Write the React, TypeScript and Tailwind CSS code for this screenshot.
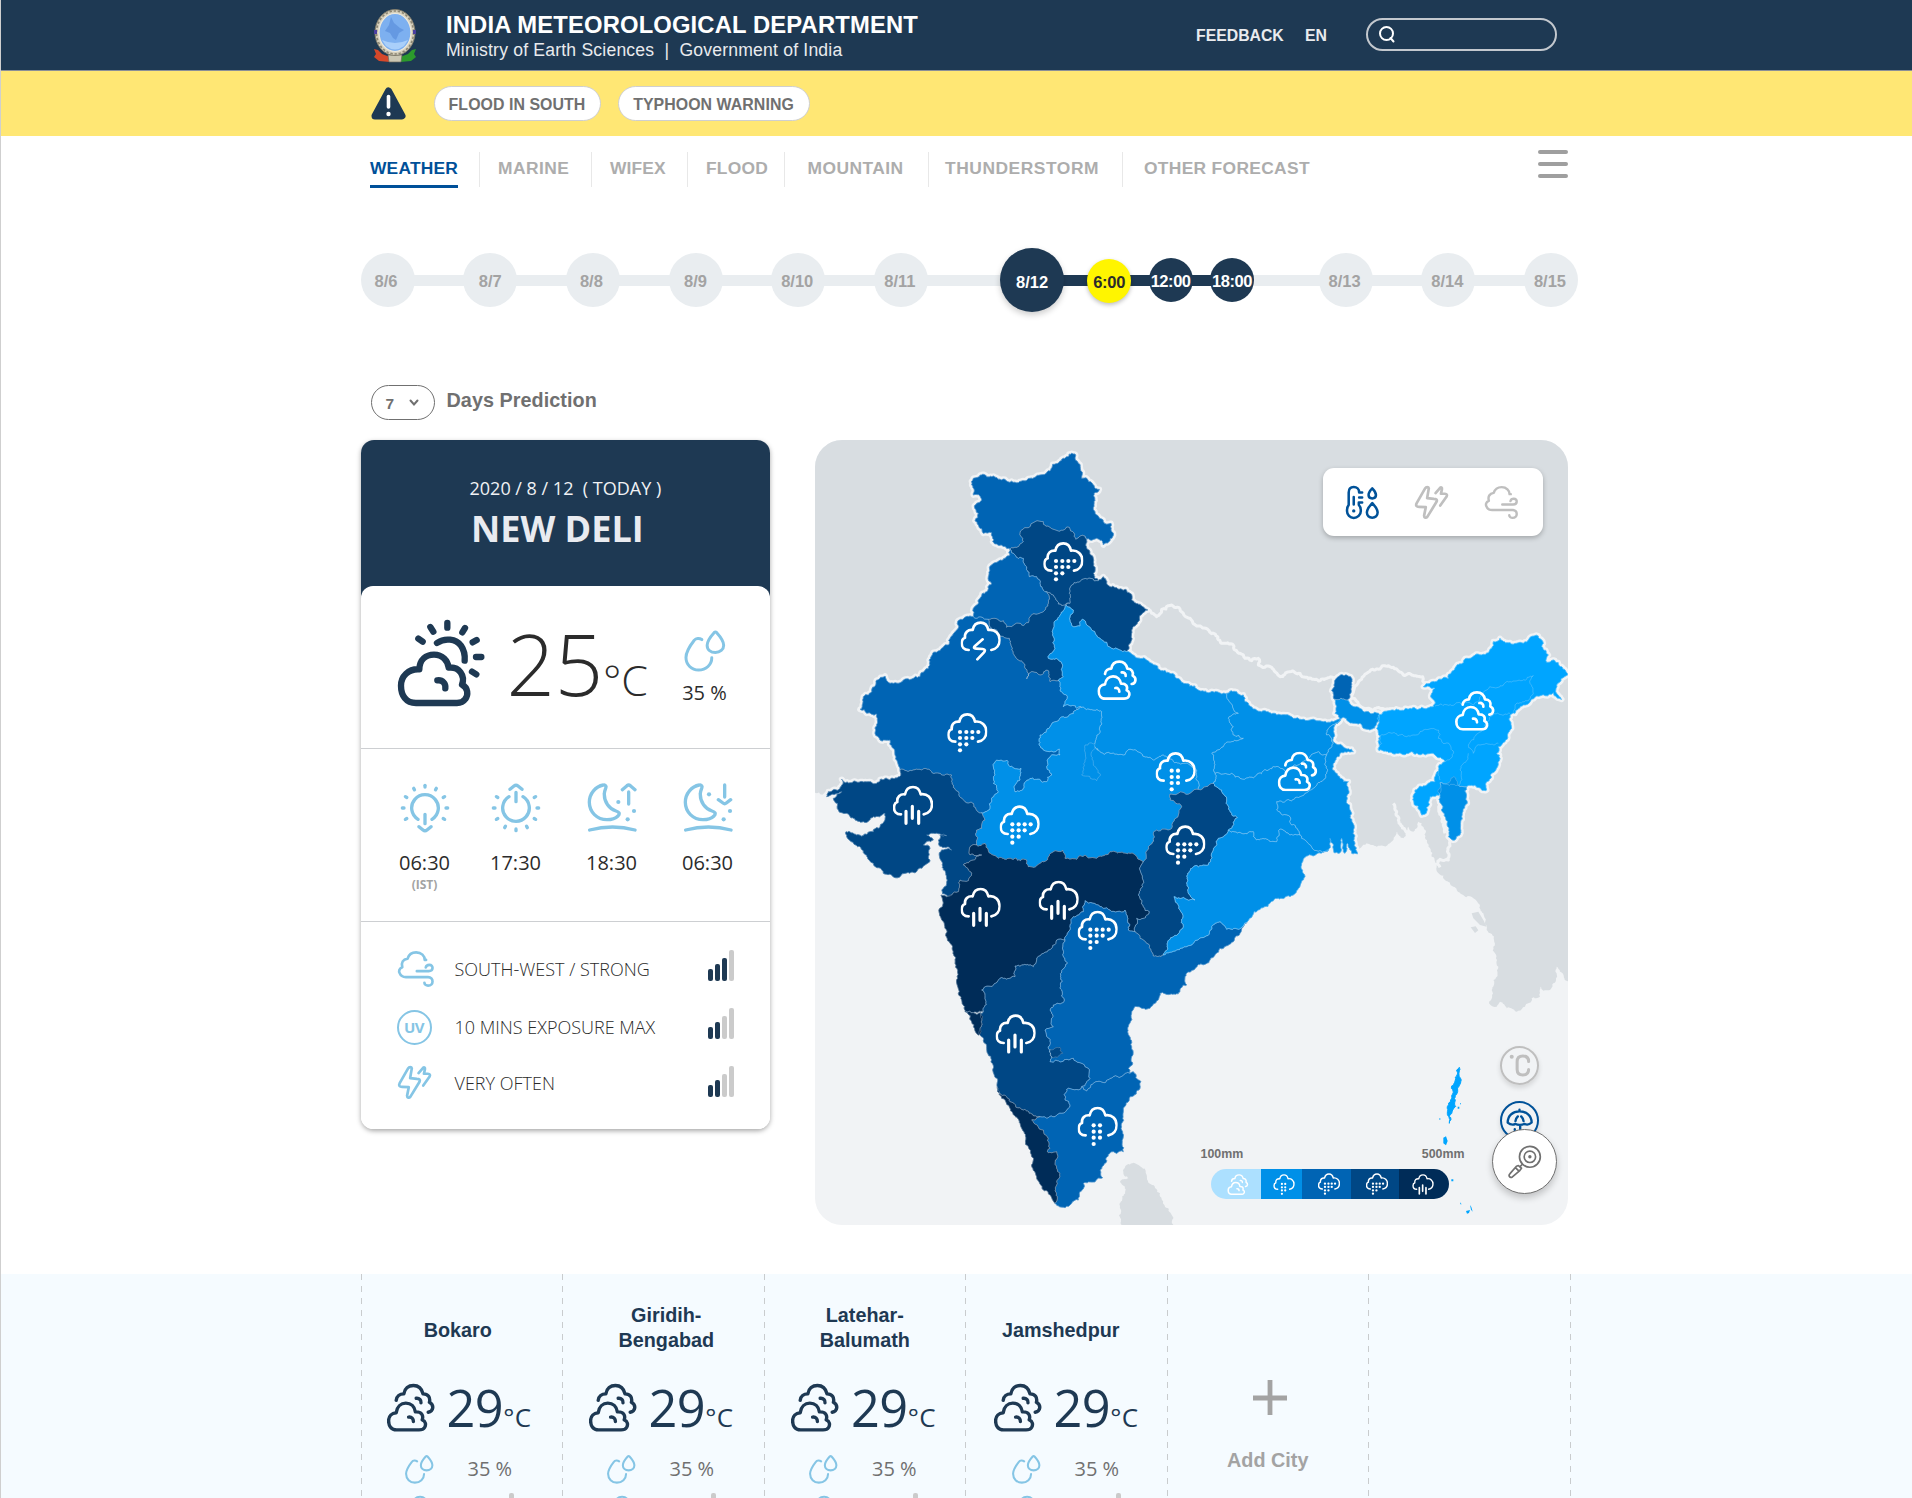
import React from "react";

const NAVY = "#1e3953";

/* ---------- map geometry ---------- */

type Pt = [number, number];

function parse(s: string): Pt[] {
  return s
    .trim()
    .split(/\s+/)
    .map((p) => p.split(",").map(Number) as Pt);
}

// Deterministic value in [-1, 1] which is the same for both directions of an edge.
function noise(a: Pt, b: Pt): number {
  const v = Math.sin((a[0] + b[0]) * 12.9898 + (a[1] + b[1]) * 78.233) * 43758.5453;
  return (v - Math.floor(v)) * 2 - 1;
}

function split(a: Pt, b: Pt, out: Pt[]) {
  const swap = a[0] > b[0] || (a[0] === b[0] && a[1] > b[1]);
  const p = swap ? b : a;
  const q = swap ? a : b;
  const dx = q[0] - p[0];
  const dy = q[1] - p[1];
  const len = Math.hypot(dx, dy);
  if (len < 7) {
    out.push(b);
    return;
  }
  const n = noise(p, q) * Math.min(0.24, 6 / len);
  const m: Pt = [(p[0] + q[0]) / 2 - dy * n, (p[1] + q[1]) / 2 + dx * n];
  split(a, m, out);
  split(m, b, out);
}

function outline(s: string, closed = true): string {
  const pts = parse(s);
  const out: Pt[] = [pts[0]];
  for (let i = 1; i < pts.length; i++) split(pts[i - 1], pts[i], out);
  if (closed) split(pts[pts.length - 1], pts[0], out);
  return "M" + out.map((p) => p[0].toFixed(1) + " " + p[1].toFixed(1)).join("L") + (closed ? "Z" : "");
}

const A = "#0064b4";
const B = "#004785";
const C = "#0090e8";
const D = "#002c58";
const E = "#00a5ff";

const states: [string, string][] = [
  [A, "485,165 490,145 518,133 545,140 585,148 625,158 660,145 690,135 712,125 728,103 760,85 785,70 795,72 805,100 815,145 845,158 868,178 852,190 855,245 880,275 903,280 908,320 880,345 860,325 840,330 825,318 798,328 778,292 745,303 720,292 700,275 675,275 655,293 635,300 640,335 620,352 600,357 575,345 548,335 545,308 520,310 505,285 495,272 505,250 493,228 515,208 510,198 490,195 493,180"],
  [B, "635,300 655,293 675,275 700,275 720,292 745,303 778,292 798,328 825,318 830,355 850,385 850,430 865,452 820,447 785,465 778,490 780,520 745,522 730,495 710,485 690,460 680,440 658,440 650,415 640,385 615,375 600,357 620,352 640,335"],
  [A, "600,357 615,375 640,385 650,415 658,440 680,440 690,460 710,485 715,520 700,545 665,555 655,578 615,582 590,592 580,572 555,565 535,568 490,560 490,535 510,505 530,485 545,462 535,440 545,405 570,390 600,375"],
  [A, "480,558 490,560 535,568 540,590 560,600 580,620 598,625 605,660 620,685 645,705 650,747 668,725 690,735 715,722 720,755 745,752 750,780 772,800 765,820 760,830 815,832 760,860 720,890 690,915 687,945 700,960 748,957 750,975 715,985 710,1010 725,1035 710,1055 680,1048 655,1050 640,1075 615,1085 612,1070 630,1050 633,1015 600,1010 590,990 560,990 550,1010 555,1035 550,1060 565,1085 545,1110 540,1135 515,1148 490,1120 465,1115 445,1085 430,1065 425,1035 395,1035 360,1020 330,1018 270,1020 255,975 240,930 210,930 195,910 202,880 200,852 170,850 150,838 160,800 185,780 200,750 225,738 240,760 280,750 330,740 360,705 365,678 415,645 440,600 448,570"],
  [C, "815,832 875,845 875,880 855,940 870,965 900,970 940,975 970,960 1030,990 1060,975 1120,1000 1160,1020 1165,1078 1080,1092 1080,1110 1115,1130 1105,1155 1085,1195 1040,1200 1015,1250 1000,1295 960,1270 900,1265 870,1278 825,1275 800,1288 765,1285 758,1260 735,1262 715,1280 690,1300 670,1312 655,1310 650,1290 580,1285 535,1262 525,1240 500,1245 500,1200 515,1195 525,1170 515,1148 540,1135 545,1110 565,1085 550,1060 555,1035 550,1010 560,990 590,990 600,1010 633,1015 630,1050 612,1070 615,1085 640,1075 655,1050 680,1048 710,1055 725,1035 710,1010 715,985 750,975 748,957 700,960 687,945 690,915 720,890 760,860"],
  [B, "535,568 555,565 580,572 590,592 615,582 655,578 665,555 700,545 715,520 710,485 730,495 745,522 768,526 750,555 732,580 730,620 735,655 715,685 745,690 758,705 760,740 745,752 720,755 715,722 690,735 668,725 650,747 645,705 620,685 605,660 598,625 580,620 560,600 540,590"],
  [B, "785,465 820,447 865,452 880,440 900,470 960,490 965,510 1013,540 985,575 965,600 965,630 950,665 905,655 870,625 845,600 817,568 810,588 790,590 780,570 790,540 768,526 780,520 778,490"],
  [C, "768,526 790,540 780,570 790,590 810,588 817,568 845,600 870,625 905,655 950,665 975,680 1010,690 1050,720 1100,745 1155,768 1165,780 1220,785 1250,790 1255,810 1285,850 1255,865 1270,890 1270,915 1300,925 1265,935 1205,970 1215,1030 1210,1060 1165,1078 1160,1020 1120,1000 1060,975 1030,990 970,960 940,975 900,970 870,965 855,950 845,965 850,1000 872,1035 860,1052 815,1035 825,990 825,945 855,940 875,880 875,845 815,832 760,830 765,820 772,800 750,780 745,752 760,740 758,705 745,690 715,685 735,655 730,620 732,580 750,555"],
  [B, "270,1020 330,1018 360,1020 395,1035 425,1035 430,1065 445,1085 465,1115 490,1120 515,1148 525,1170 515,1195 500,1200 500,1245 480,1250 480,1275 515,1275 490,1290 460,1305 485,1330 475,1352 450,1350 445,1385 425,1395 398,1392 412,1350 400,1320 392,1290 388,1268 425,1260 395,1250 385,1230 390,1215 410,1217 370,1210 350,1215 370,1230 340,1245 360,1255 355,1280 360,1290 345,1305 300,1330 255,1343 220,1330 190,1300 150,1250 110,1220 108,1205 140,1215 190,1205 225,1170 225,1150 190,1160 160,1175 130,1165 85,1140 70,1105 95,1085 50,1100 55,1085 90,1075 95,1048 165,1055 200,1060 225,1045 240,1050 268,1040"],
  [D, "480,1250 500,1245 525,1240 535,1262 580,1285 650,1290 655,1310 670,1312 690,1300 715,1280 735,1262 758,1260 765,1285 800,1288 825,1275 870,1278 900,1265 960,1270 1000,1295 990,1320 998,1370 985,1395 1000,1430 1018,1445 1000,1465 980,1465 975,1505 955,1500 945,1440 900,1440 870,1430 825,1412 820,1445 790,1460 780,1500 765,1530 740,1530 715,1560 680,1590 670,1610 615,1608 615,1640 580,1645 550,1665 515,1680 528,1715 520,1745 490,1748 465,1745 445,1690 435,1600 420,1540 410,1500 395,1470 393,1395 425,1395 445,1385 450,1350 475,1352 485,1330 460,1305 490,1290 515,1275 480,1275"],
  [B, "515,1680 550,1665 580,1645 615,1640 615,1608 670,1610 680,1590 715,1560 740,1530 765,1530 760,1570 772,1598 755,1625 755,1680 762,1715 730,1725 725,1750 730,1790 705,1800 715,1850 725,1880 720,1895 755,1895 790,1885 825,1910 840,1945 815,1970 770,1978 765,2010 780,2025 775,2035 740,2055 690,2060 640,2040 600,2015 562,1972 548,1920 545,1890 530,1850 510,1815 512,1750 520,1745 528,1715"],
  [D, "468,1745 490,1748 512,1748 512,1800 505,1815 485,1775"],
  [A, "825,1412 870,1430 900,1440 945,1440 955,1500 975,1505 1010,1540 1030,1578 1060,1575 1100,1560 1130,1550 1150,1540 1185,1520 1205,1490 1230,1475 1250,1498 1285,1498 1312,1475 1290,1510 1265,1537 1230,1555 1200,1590 1150,1620 1125,1640 1130,1665 1110,1685 1080,1693 1050,1690 1035,1720 1020,1735 985,1730 965,1745 955,1790 965,1850 968,1900 955,1915 960,1930 910,1940 885,1958 850,1960 830,1983 815,1970 840,1945 825,1910 790,1885 755,1895 720,1895 725,1880 715,1850 705,1800 730,1790 725,1750 730,1725 762,1715 755,1680 755,1625 772,1598 760,1570 765,1530 780,1500 790,1460 820,1445"],
  [A, "690,2060 740,2055 775,2035 780,2025 765,2010 770,1978 815,1970 830,1983 850,1960 885,1958 910,1940 960,1930 970,1925 993,1955 990,1975 960,2000 940,2040 935,2080 940,2120 940,2165 900,2168 870,2220 878,2243 820,2260 808,2290 805,2310 765,2333 735,2320 742,2300 740,2265 750,2230 740,2215 740,2165 712,2165 712,2120 700,2100 665,2070"],
  [D, "562,1972 600,2015 640,2040 690,2060 665,2070 700,2100 712,2120 712,2165 740,2165 740,2215 750,2230 740,2265 742,2300 735,2320 700,2280 680,2240 668,2200 655,2150 630,2080 600,2035 575,2005"],
  [B, "720,1858 750,1852 758,1870 742,1882 720,1875"],
  [B, "1080,1092 1165,1078 1210,1060 1235,1080 1250,1110 1260,1145 1282,1163 1255,1200 1225,1225 1210,1260 1195,1305 1155,1307 1133,1330 1140,1395 1155,1410 1130,1408 1092,1400 1110,1440 1120,1490 1090,1520 1060,1575 1030,1578 1010,1540 975,1505 980,1465 1000,1465 1018,1445 1000,1430 985,1395 998,1370 990,1320 1000,1295 1015,1250 1040,1200 1085,1195 1105,1155 1115,1130 1080,1110"],
  [C, "1225,1225 1255,1200 1330,1205 1340,1230 1400,1235 1410,1197 1440,1215 1470,1215 1485,1230 1520,1262 1555,1260 1520,1272 1490,1278 1475,1300 1485,1340 1465,1375 1440,1400 1380,1420 1345,1440 1312,1475 1285,1498 1250,1498 1230,1475 1205,1490 1185,1520 1150,1540 1130,1550 1100,1560 1060,1575 1090,1520 1120,1490 1110,1440 1092,1400 1130,1408 1155,1410 1140,1395 1133,1330 1155,1307 1195,1305 1210,1260"],
  [C, "1215,1030 1265,1030 1290,1045 1340,1035 1390,1010 1430,1025 1490,990 1525,965 1550,975 1550,1030 1510,1075 1470,1100 1400,1115 1400,1140 1440,1160 1445,1185 1470,1215 1440,1215 1410,1197 1400,1235 1340,1230 1330,1205 1255,1200 1282,1163 1260,1145 1250,1110 1235,1080 1210,1060"],
  [C, "1250,790 1280,785 1300,795 1305,815 1340,840 1370,845 1400,855 1450,865 1500,870 1540,875 1580,870 1590,865 1560,890 1550,915 1570,940 1550,975 1525,965 1490,990 1430,1025 1390,1010 1340,1035 1290,1045 1265,1030 1215,1030 1205,970 1265,935 1300,925 1270,915 1270,890 1255,865 1285,850 1255,810"],
  [C, "1575,808 1610,810 1640,830 1680,850 1708,853 1700,880 1680,900 1660,895 1650,880 1630,880 1600,862 1572,900 1568,930 1600,950 1630,965 1590,970 1570,1000 1568,1020 1590,1045 1615,1055 1610,1100 1625,1150 1630,1200 1642,1272 1625,1270 1612,1240 1605,1270 1595,1225 1588,1270 1572,1268 1560,1225 1555,1260 1520,1262 1485,1230 1470,1215 1445,1185 1440,1160 1400,1140 1400,1115 1470,1100 1510,1075 1550,1030 1550,975 1570,940 1550,915 1560,890 1590,865 1575,850"],
  [A, "1570,800 1572,765 1582,742 1610,735 1622,740 1625,770 1620,800 1610,810 1575,808"],
  [E, "1840,770 1860,760 1915,745 1925,725 1970,685 2045,655 2050,635 2070,625 2100,638 2140,640 2160,622 2185,618 2200,640 2195,650 2215,675 2210,697 2230,690 2255,710 2273,735 2240,765 2237,785 2255,808 2230,788 2180,798 2140,825 2115,850 2100,855 2100,900 2085,935 2065,950 2060,970 2070,985 2045,1030 2030,1080 2000,1072 1970,1070 1945,1065 1910,1062 1890,1058 1888,1095 1860,1100 1850,1145 1835,1155 1825,1130 1808,1110 1815,1080 1875,1055 1885,1010 1905,995 1875,975 1820,970 1760,970 1705,960 1710,920 1700,895 1705,855 1745,840 1800,835 1870,830 1875,815 1865,790 1875,775"],
  [C, "1890,1058 1910,1062 1930,1040 1945,1065 1970,1070 1972,1120 1955,1160 1950,1215 1935,1230 1915,1220 1905,1160 1890,1100"],
];

const shapes = states.map(([fill, pts]) => ({ fill, d: outline(pts) }));

const provinceLines = [
  "1875,828 1940,818 1990,825 2030,780 2040,770 2100,755 2170,737 2160,760 2170,790 2115,825 2110,845",
  "1708,960 1710,920 1740,908 1790,920 1810,915 1830,905 1885,900 1885,925 1920,945 1930,970 1905,995",
  "1975,945 2005,910 2040,860 2100,850",
  "1975,945 1990,970 2010,945 2065,940",
  "1975,970 1950,1020 1948,1065",
  "1885,1010 1890,1050",
].map((s) => outline(s, false));

const foreignBorders = [
  "1013,540 1025,550 1040,560 1055,538 1075,527 1110,537 1140,565 1160,588 1195,600 1235,640 1270,645 1290,670 1325,692 1345,685 1345,705 1385,712 1410,740 1425,733 1455,728 1510,748 1575,743",
  "1620,800 1640,765 1670,730 1720,707 1750,712 1780,735 1838,740 1845,765",
  "1625,805 1650,828 1690,842 1745,840",
  "1915,1220 1915,1290 1890,1288 1882,1302 1890,1312",
  "1860,1098 1885,1092 1895,1160 1905,1210",
  "1750,1120 1760,1145 1765,1170 1785,1200 1800,1215",
].map((s) => outline(s, false));

const land = outline(
  "1600,1262 1540,1230 1400,1150 600,1150 225,1060 95,1060 60,1095 15,1088 -40,1080 -40,-20 2340,-20 2340,1740 2276,1668 2240,1610 2238,1650 2220,1680 2200,1682 2190,1670 2190,1700 2165,1705 2145,1730 2125,1742 2090,1735 2070,1715 2060,1730 2037,1720 2045,1680 2050,1650 2065,1610 2055,1570 2052,1530 2030,1500 2020,1450 1990,1405 1950,1390 1930,1370 1905,1350 1880,1310 1865,1280 1852,1240 1848,1205 1835,1180 1825,1175 1810,1205 1795,1190 1780,1225 1760,1205 1740,1240 1700,1250 1670,1240 1640,1268"
);
const lanka = outline("945,2210 975,2200 1010,2235 1050,2290 1090,2385 1090,2440 935,2440 935,2385 930,2330 945,2270 930,2256 955,2245 940,2225");
const andaman = outline("1948,1912 1940,1920 1936,1950 1924,1975 1922,2010 1912,2050 1918,2080 1928,2040 1935,2015 1943,1980 1948,1940");

/* ---------- icons ---------- */

type IconProps = { className?: string; x?: number; y?: number; size?: number };

function Box({ vb, w = 8, children, className, x, y, size }: IconProps & { vb: string; w?: number; children: React.ReactNode }) {
  return (
    <svg viewBox={vb} x={x} y={y} width={size} height={size} className={className} fill="none" stroke="currentColor" strokeWidth={w} strokeLinecap="round" strokeLinejoin="round">
      {children}
    </svg>
  );
}

const rainCloud = "M24 87C9 87 3 77 3 67C3 58 7 52 13 50C11 35 22 25 36 27C39 11 49 5 60 5C72 5 80 13 83 27C103 24 117 38 117 57C117 72 108 84 92 87";

function Dots({ pts }: { pts: Pt[] }) {
  return (
    <g fill="currentColor" stroke="none">
      {pts.map(([cx, cy]) => (
        <circle key={cx + "-" + cy} cx={cx} cy={cy} r={6.3} />
      ))}
    </g>
  );
}

const Rain = (p: IconProps) => (
  <Box vb="0 0 120 120" {...p}>
    <path d={rainCloud} />
    <Dots pts={[[38, 58], [57, 58], [75, 58], [93, 58], [38, 76], [57, 76], [75, 76], [38, 95], [57, 95], [38, 113]]} />
  </Box>
);
const Drizzle = (p: IconProps) => (
  <Box vb="0 0 120 120" {...p}>
    <path d={rainCloud} />
    <Dots pts={[[48, 57], [67, 57], [48, 76], [67, 76], [48, 94], [67, 94], [48, 113]]} />
  </Box>
);
const Heavy = (p: IconProps) => (
  <Box vb="0 0 120 120" {...p}>
    <path d={rainCloud} />
    <path strokeWidth={9.5} d="M39 78V114M58 63V99M77 78V114" />
  </Box>
);
const Thunder = (p: IconProps) => (
  <Box vb="0 0 120 120" {...p}>
    <path d={rainCloud} />
    <path d="M66 55L43 75C38 80 40 83 46 83L66 84C74 85 74 89 70 94L50 115" />
  </Box>
);
const Cloudy = ({ w = 8.5, ...p }: IconProps & { w?: number }) => (
  <Box vb="0 0 120 120" w={w} {...p}>
    <path d="M23 42C24 32 32 26 42 26C44 12 54 5 66 5C79 5 87 13 90 26C103 26 109 35 106 47C119 54 116 70 103 72" />
    <path d="M73 37C81 36 86 42 85 48" />
    <path d="M24 116C10 116 4 105 4 93C4 82 12 74 23 73C25 58 35 49 47 49C60 49 69 58 71 71C86 70 92 79 88 91C97 94 98 103 94 110C91 115 87 116 80 116Z" />
    <path d="M54 84C62 83 66 88 66 95" />
  </Box>
);
const SunCloud = (p: IconProps) => (
  <Box vb="135 565 270 270" w={19} {...p}>
    <path d="M195 820C165 820 150 797 150 768C150 740 172 717 205 719C206 690 225 675 249 675C275 675 290 693 293 714C325 710 343 738 333 765C352 775 352 796 343 808C336 818 328 820 318 820Z" />
    <path d="M259 752C275 750 285 762 283 776M258 640C282 623 315 628 330 648C342 665 342 680 341 693" />
    <path d="M289 580V594M238 592L247 606M202 627L215 636M342 595L334 608M377 631L365 638M375 682H391M363 726L376 734" />
  </Box>
);
const Drops = (p: IconProps) => (
  <Box vb="1000 600 130 130" w={9} {...p}>
    <path d="M1094 611C1084 622 1073 636 1073 649C1073 663 1084 671 1098 671C1112 671 1123 662 1123 649C1123 636 1112 622 1102 611Q1098 607 1094 611Z" />
    <path d="M1057 632C1050 627 1039 627 1034 634C1020 652 1009 668 1009 686C1009 708 1026 724 1047 724C1070 724 1087 708 1087 687" />
  </Box>
);

function SunArrow({ flip, ...p }: IconProps & { flip?: boolean }) {
  const angles = [150, 180, 210, 240, 270, 300, 330, 0, 30];
  return (
    <Box vb="-75 -75 150 150" w={10} {...p}>
      <g transform={flip ? "scale(1 -1)" : undefined}>
        <path d="M-21 34A40 40 0 1 1 21 34M0 19V47M-18 56L-6 66Q0 71 6 66L18 56" />
        {angles.map((a) => {
          const c = Math.cos((a * Math.PI) / 180);
          const s = Math.sin((a * Math.PI) / 180);
          return <line key={a} x1={c * 63} y1={s * 63} x2={c * 68} y2={s * 68} />;
        })}
      </g>
    </Box>
  );
}

function Moon({ down, ...p }: IconProps & { down?: boolean }) {
  const dots: Pt[] = down ? [[786, 164], [849, 214], [830, 239]] : [[802, 187], [849, 214], [830, 239]];
  return (
    <Box vb="708 130 150 150" w={10} {...p}>
      <path d="M757 136C734 140 715 162 715 188C715 217 738 240 768 240C782 240 794 236 801 229C808 221 804 217 795 214C775 208 759 188 760 162C760 152 766 145 765 140C763 135 760 135 757 136Z" />
      <path d="M716 271Q785 253 852 271" />
      <path d={down ? "M833 136V172M814 180L828 190Q833 194 838 190L851 180" : "M833 157V193M814 150L828 138Q833 134 838 138L852 150"} />
      <Dots pts={dots} />
    </Box>
  );
}

const Wind = (p: IconProps) => (
  <Box vb="138 632 115 115" {...p}>
    <path d="M226 662H222C222 650 212 639 196 639C182 639 173 648 170 658C156 660 150 670 154 684C144 688 143 697 146 702C149 710 156 714 165 714H232C250 714 250 740 232 740C226 740 221 736 221 731" />
    <path d="M198 696H234C249 696 249 677 236 677C230 677 226 680 225 685" />
  </Box>
);
const Bolts = (p: IconProps) => (
  <Box vb="139 979 104 104" {...p}>
    <path d="M183 989C182 984 175 984 172 989L147 1033C143 1041 147 1044 154 1044L174 1045L169 1070C169 1077 175 1078 179 1073L206 1029C209 1022 205 1020 198 1020L178 1018Z" />
    <path d="M203 1003L216 988C220 984 223 987 222 992L219 1005H231C237 1005 238 1009 236 1013L217 1040" />
  </Box>
);
const Thermo = (p: IconProps) => (
  <Box vb="465 164 104 104" w={7.5} {...p}>
    <path d="M516 186H507C507 176 500 170 491 170C482 170 476 176 476 186V223C472 228 471 234 471 241C471 253 480 262 491 262C502 262 512 253 512 241C512 233 510 227 506 223V216H516M507 201H516M491 200V222" />
    <circle cx="491" cy="241" r="5" fill="currentColor" stroke="none" />
    <path d="M546 174C540 180 535 187 535 194C535 200 539 204 546 204C553 204 557 200 557 194C557 187 552 180 546 174Z" />
    <path d="M546 218C538 227 530 235 530 245C530 255 537 261 546 261C555 261 562 255 562 245C562 235 554 227 546 218Z" />
  </Box>
);
const Umbrella = (p: IconProps) => (
  <Box vb="950 830 80 80" w={7} {...p}>
    <path d="M990 838V843M955 876C955 855 970 843 990 843C1010 843 1026 855 1026 876C1018 884 1008 882 1004 880C998 884 984 884 978 880C970 884 962 882 955 876ZM978 872C979 866 982 861 985 858M1002 872C1001 866 998 861 995 858M992 884V900M976 896V898" />
  </Box>
);
const Locate = (p: IconProps) => (
  <Box vb="950 942 104 104" w={5} {...p}>
    <circle cx="1018" cy="980" r="31" />
    <circle cx="1018" cy="980" r="17" />
    <circle cx="1018" cy="980" r="5" fill="currentColor" stroke="none" />
    <path d="M995 1003L988 1010M984 1006L993 1014L988 1021L966 1040C958 1044 953 1036 959 1030L978 1008ZM975 1012L984 1021" />
  </Box>
);

function Emblem() {
  return (
    <svg viewBox="0 0 44 54" className="h-[54px] w-[44px]">
      <path d="M1 40L5 41L9 45L17 48V53L6 52L1 48L3 45Z" fill="#d5482a" />
      <path d="M43 40L39 41L35 45L27 48V53L38 52L43 48L41 45Z" fill="#2c9a2c" />
      <path d="M15 46H29L28 53H16Z" fill="#cbc7b4" stroke="#6f6b5b" strokeWidth="0.7" />
      <ellipse cx="22" cy="23.500" rx="20" ry="23" fill="#d6d0bd" stroke="#827d6c" strokeWidth="1" />
      <ellipse cx="22" cy="23.500" rx="18.500" ry="21.500" fill="none" stroke="#8d8774" strokeWidth="1.600" strokeDasharray="2.400 1.800" />
      <ellipse cx="22" cy="23.500" rx="16" ry="19" fill="#7db0f0" stroke="#efeadb" strokeWidth="1.200" />
      <path d="M18 8L21 14L27 19L31 21L26 24L23 31L20 29L17 24L12 22L16 16Z" fill="#5f93de" opacity="0.8" />
      <path d="M9 31Q22 37 35 31L31 37Q22 44 13 37Z" fill="#a9cffa" />
      <rect x="1" y="21" width="3" height="4" fill="#4b3fa0" />
      <rect x="40" y="21" width="3" height="4" fill="#4b3fa0" />
    </svg>
  );
}

/* ---------- page pieces ---------- */

function Header() {
  return (
    <header className="flex h-[71px] border-b border-[#8b9097] bg-[#1e3953] pl-[373px]">
      <div className="mt-[9px]">
        <Emblem />
      </div>
      <div className="ml-[29px] w-[750px] pt-[12px] whitespace-pre">
        <div className="text-[23.8px] leading-[25px] font-bold tracking-[0.14px] text-white">INDIA METEOROLOGICAL DEPARTMENT</div>
        <div className="text-[17.6px] leading-[26px] tracking-[0.19px] text-[#e9ebee]">Ministry of Earth Sciences  |  Government of India</div>
      </div>
      <div className="flex h-[70px] items-center text-[15.8px] font-bold text-[#e9ebee]">
        <span className="w-[109px] pt-px">FEEDBACK</span>
        <span className="w-[61px] pt-px">EN</span>
        <div className="-mt-[2px] flex h-[33px] w-[191px] items-center rounded-[17px] border-2 border-[#c3c8ce] pl-[10px]">
          <svg viewBox="0 0 18 18" className="h-[18px] w-[18px]" fill="none" stroke="#fff" strokeWidth="2" strokeLinecap="round">
            <circle cx="8.500" cy="8.500" r="6.500" />
            <path d="M12.500 13L15.500 16.500" />
          </svg>
        </div>
      </div>
    </header>
  );
}

function Alerts() {
  return (
    <div className="flex h-[65px] items-center bg-[#ffe774] pl-[370.500px]">
      <svg viewBox="0 0 35 33" className="h-[33px] w-[35px]">
        <path d="M17.500 4L31 29H4Z" fill={NAVY} stroke={NAVY} strokeWidth="7" strokeLinejoin="round" />
        <path d="M17.500 9.500V20" stroke="#fff" strokeWidth="3.600" strokeLinecap="round" />
        <circle cx="17.500" cy="27" r="2.200" fill="#fff" />
      </svg>
      <div className="ml-[28px] flex gap-[17px] text-[15.9px] font-bold tracking-[0.06px] text-[#707070]">
        <div className="flex h-[35px] w-[167px] items-center justify-center rounded-[18px] border border-[#cfcfcf] bg-white pt-[2px]">FLOOD IN SOUTH</div>
        <div className="flex h-[35px] w-[192px] items-center justify-center rounded-[18px] border border-[#cfcfcf] bg-white pt-[2px]">TYPHOON WARNING</div>
      </div>
    </div>
  );
}

function Nav() {
  const cell = "h-[35px] border-l border-[#e8e8e8] leading-[32px]";
  return (
    <nav className="flex h-[94px] pt-[16px] pl-[370px] text-[17.4px] font-bold text-[#adadad]">
      <div className="w-[109px]">
        <div className="h-[36px] w-[88px] border-b-[3px] border-[#005099] leading-[32px] tracking-[0.2px] text-[#005099]">WEATHER</div>
      </div>
      <div className={`${cell} w-[112px] pl-[18px] tracking-[0.45px]`}>MARINE</div>
      <div className={`${cell} w-[96px] pl-[18px] tracking-[0.15px]`}>WIFEX</div>
      <div className={`${cell} w-[97px] pl-[18px] tracking-[0.25px]`}>FLOOD</div>
      <div className={`${cell} w-[144px] pl-[22.500px] tracking-[0.45px]`}>MOUNTAIN</div>
      <div className={`${cell} w-[194px] pl-[16px] tracking-[0.55px]`}>THUNDERSTORM</div>
      <div className={`${cell} w-[416px] pl-[21px] tracking-[0.32px]`}>OTHER FORECAST</div>
      <div className="-mt-[2px] flex flex-col gap-[8px]">
        <div className="h-[4px] w-[30px] rounded-full bg-[#9f9f9f]" />
        <div className="h-[4px] w-[30px] rounded-full bg-[#9f9f9f]" />
        <div className="h-[4px] w-[30px] rounded-full bg-[#9f9f9f]" />
      </div>
    </nav>
  );
}

function Day({ label, shift = "" }: { label: string; shift?: string }) {
  return (
    <div className="flex h-[54px] w-[54px] shrink-0 items-center justify-center rounded-full bg-[#e9edf0] pt-[3px] font-bold text-[#a3a3a3]">
      <span className={shift}>{label}</span>
    </div>
  );
}
const Link = ({ className }: { className: string }) => <div className={`h-[11px] shrink-0 ${className}`} />;

function Timeline() {
  const hour = "z-10 flex h-[44px] w-[44px] shrink-0 items-center justify-center rounded-full pt-[2px] font-bold whitespace-nowrap";
  const past: [string, string][] = [
    ["8/6", "-ml-[3px]"],
    ["8/7", "ml-0"],
    ["8/8", "-ml-[3px]"],
    ["8/9", "ml-0"],
    ["8/10", "-ml-[2px]"],
  ];
  return (
    <div className="flex h-[100px] items-center pl-[360.500px] text-[16.5px]">
      {past.map(([d, shift]) => (
        <React.Fragment key={d}>
          <Day label={d} shift={shift} />
          <Link className="-mx-[2px] w-[52.700px] bg-[#e9edf0]" />
        </React.Fragment>
      ))}
      <Day label="8/11" shift="-ml-[2px]" />
      <Link className="-mx-[2px] w-[76.200px] bg-[#e9edf0]" />
      <div className="z-10 flex h-[64px] w-[64px] shrink-0 items-center justify-center rounded-full bg-[#1e3953] pt-[4px] font-bold text-white shadow-[0_3px_6px_rgba(0,0,0,0.2)]">8/12</div>
      <Link className="-mx-[2px] w-[27px] bg-[#1e3953]" />
      <div className={`${hour} mt-[2px] bg-[#fff500] text-[#2b2b2b] shadow-[0_2px_4px_rgba(0,0,0,0.25)]`}>
        <span className="tracking-[-0.3px]">6:00</span>
      </div>
      <Link className="-mx-[2px] w-[21.500px] bg-[#1e3953]" />
      <div className={`${hour} bg-[#1e3953] text-white`}>
        <span className="tracking-[-0.45px]">12:00</span>
      </div>
      <Link className="-mx-[2px] w-[21.300px] bg-[#1e3953]" />
      <div className={`${hour} bg-[#1e3953] text-white`}>
        <span className="tracking-[-0.45px]">18:00</span>
      </div>
      <Link className="-mx-[2px] w-[68.700px] bg-[#e9edf0]" />
      <Day label="8/13" shift="-ml-[2px]" />
      <Link className="-mx-[2px] w-[52.700px] bg-[#e9edf0]" />
      <Day label="8/14" shift="-ml-[2px]" />
      <Link className="-mx-[2px] w-[52.700px] bg-[#e9edf0]" />
      <Day label="8/15" shift="-ml-[2px]" />
    </div>
  );
}

function Bars({ level }: { level: number }) {
  const heights = ["h-[12px]", "h-[17px]", "h-[23px]", "h-[31px]"];
  return (
    <div className="flex items-end gap-[2px]">
      {heights.map((h, i) => (
        <div key={h} className={`w-[5px] rounded-[2px] ${h} ${i < level ? "bg-[#1e3953]" : "bg-[#cbcbcb]"}`} />
      ))}
    </div>
  );
}

function TodayCard() {
  const times: [React.ReactNode, string, string, string][] = [
    [<SunArrow className="h-[50px] w-[50px]" />, "06:30", "(IST)", "ml-[34px]"],
    [<SunArrow flip className="h-[50px] w-[50px]" />, "17:30", "", "ml-[31px]"],
    [<Moon className="h-[50px] w-[50px]" />, "18:30", "", "ml-[36px]"],
    [<Moon down className="h-[50px] w-[50px]" />, "06:30", "", "ml-[36px]"],
  ];
  return (
    <section className="h-[689px] w-[409px] shrink-0 rounded-[13px] bg-[linear-gradient(#1e3953_160px,#fff_160px)] font-['Open_Sans','Noto_Sans',sans-serif] shadow-[0_2px_5px_rgba(0,0,0,0.35)]">
      <div className="h-[146px] pt-[36px]">
        <div className="pl-[109px] text-[18px] leading-[24px] whitespace-pre text-[#f0f1f4]">2020 / 8 / 12  ( TODAY )</div>
        <div className="mt-[8px] pl-[110.500px] text-[36px] leading-[41px] font-bold text-[#e9ebf0]">NEW DELI</div>
      </div>
      <div className="h-[543px] rounded-[12px] bg-white">
        <div className="flex h-[163px] border-b border-[#cdcfd2]">
          <SunCloud className="mt-[32px] ml-[35px] h-[90px] w-[90px] text-[#1e3953]" />
          <div className="ml-[21px] flex w-[166px] items-baseline pt-[27px] leading-[100px] font-light text-[#2b2b2b]">
            <span className="text-[85px] tracking-[-0.3px]">25</span>
            <span className="text-[43px]">°C</span>
          </div>
          <div className="mt-[43px] flex w-[64px] flex-col items-center">
            <Drops className="h-[43px] w-[43px] text-[#85c5e5]" />
            <div className="mt-[9px] text-[20px] leading-[24px] text-[#2b2b2b]">35 %</div>
          </div>
        </div>
        <div className="flex h-[173px] border-b border-[#cdcfd2] text-[#85c5e5]">
          {times.map(([icon, t, note, m], i) => (
            <div key={i} className={`flex w-[60px] flex-col items-center pt-[34px] ${m}`}>
              {icon}
              <div className="mt-[18px] text-[20px] leading-[24px] text-[#2b2b2b]">{t}</div>
              <div className="mt-[2px] text-[12px] leading-[16px] font-bold text-[#a3a3a3]">{note}</div>
            </div>
          ))}
        </div>
        <div className="pt-[18px] text-[18px] font-light text-[#2b2b2b]">
          <div className="flex h-[58px] items-center pl-[36px]">
            <Wind className="h-[38px] w-[38px] text-[#85c5e5]" />
            <div className="mt-px ml-[20px] w-[253px]">SOUTH-WEST / STRONG</div>
            <div className="pb-[7px]"><Bars level={3} /></div>
          </div>
          <div className="flex h-[58px] items-center pl-[36px]">
            <div className="flex h-[35px] w-[35px] items-center justify-center rounded-full border-[2.500px] border-[#85c5e5] text-[15px] font-bold tracking-[-0.5px] text-[#85c5e5]">UV</div>
            <div className="mt-px ml-[23px] w-[253px]">10 MINS EXPOSURE MAX</div>
            <div className="pb-[7px]"><Bars level={2} /></div>
          </div>
          <div className="flex h-[58px] items-center pl-[36px]">
            <Bolts className="-mt-[5px] h-[35px] w-[35px] text-[#85c5e5]" />
            <div className="-mt-[3px] ml-[23px] w-[253px]">VERY OFTEN</div>
            <div className="pb-[7px]"><Bars level={2} /></div>
          </div>
        </div>
      </div>
    </section>
  );
}

function IndiaMap() {
  return (
    <svg viewBox="15 30 2259 2355" className="block h-[785px] w-[753px] rounded-[27px] bg-[#f1f3f5] text-white">
      <path d={land} fill="#d8dde1" />
      <path d={lanka} fill="#d8dde1" />
      <path d="M1985 1450l20 -5 15 25 10 20 -20 -5 -20 -20ZM1982 1492l15 -3 8 12 -10 8Z" fill="#d8dde1" />
      <g fill="none" stroke="#f1f3f5" strokeWidth="9" strokeLinejoin="round">
        {foreignBorders.map((d, i) => (
          <path key={i} d={d} />
        ))}
        {shapes.map((s, i) => (
          <path key={i} d={s.d} strokeWidth="17" />
        ))}
      </g>
      {shapes.map((s, i) => (
        <path key={i} d={s.d} fill={s.fill} stroke={s.fill} strokeWidth="2" />
      ))}
      <g fill="none" stroke="#cfe3f6" strokeOpacity="0.4" strokeWidth="2">
        {shapes.map((s, i) => (
          <path key={i} d={s.d} />
        ))}
        {provinceLines.map((d, i) => (
          <path key={i} d={d} />
        ))}
      </g>
      <g fill={E}>
        <path d={andaman} stroke={E} strokeWidth="3" />
        <path d="M1900 2123l8 -4 5 14 -5 13 -8 -6ZM1924 2248h6v6h-6ZM1888 2065h3v4h-3ZM1943 2030h5v6h-5ZM1950 2020h3v3h-3ZM1968 2343l12 -3 -3 9 -6 2ZM1980 2325l4 6 4 14 -5 -6ZM1950 2317l5 6h-4Z" />
      </g>
      <Rain x={700} y={335} size={120} />
      <Thunder x={452} y={573} size={120} />
      <Cloudy w={8} x={862} y={690} size={120} />
      <Rain x={412} y={848} size={120} />
      <Drizzle x={1037} y={965} size={120} />
      <Heavy x={249} y={1066} size={120} />
      <Rain x={569} y={1125} size={120} />
      <Cloudy w={8} x={1403} y={964} size={120} />
      <Cloudy w={8} x={1935} y={782} size={120} />
      <Rain x={1066} y={1185} size={120} />
      <Heavy x={452} y={1372} size={120} />
      <Heavy x={686} y={1351} size={120} />
      <Rain x={803} y={1441} size={120} />
      <Heavy x={557} y={1752} size={120} />
      <Drizzle x={803} y={2029} size={120} />
    </svg>
  );
}

function MapPanel() {
  const ring = "absolute flex h-[39px] w-[39px] items-center justify-center rounded-full border-[2.500px] shadow-[0_3px_5px_rgba(0,0,0,0.12)]";
  return (
    <section className="relative ml-[45px] h-[785px] w-[753px]">
      <IndiaMap />
      <div className="absolute top-[28px] left-[508px] flex h-[68px] w-[220px] items-center justify-between rounded-[11px] bg-white pr-[24px] pl-[22px] shadow-[0_2px_5px_rgba(0,0,0,0.25)]">
        <Thermo className="h-[35px] w-[35px] text-[#005299]" />
        <Bolts className="h-[35px] w-[35px] text-[#bfbfbf]" />
        <Wind className="h-[35px] w-[35px] text-[#bfbfbf]" />
      </div>
      <div className="absolute top-[706px] left-[386px] w-[264px] text-[12.4px] font-bold text-[#707070]">
        <div className="flex justify-between leading-[16px]">
          <span>100mm</span>
          <span>500mm</span>
        </div>
        <div className="mt-[7px] ml-[10px] flex h-[30px] w-[238px] overflow-hidden rounded-full text-white">
          <div className="flex w-[50px] items-center bg-[#ace0ff] pl-[16px]"><Cloudy className="h-[21px] w-[22px]" /></div>
          <div className="flex w-[41px] items-center bg-[#0090e8] pl-[12px]"><Drizzle className="h-[21px] w-[22px]" /></div>
          <div className="flex w-[49px] items-center bg-[#0064b4] pl-[16px]"><Rain className="h-[22px] w-[22px]" /></div>
          <div className="flex w-[48px] items-center bg-[#004785] pl-[15px]"><Rain className="h-[22px] w-[22px]" /></div>
          <div className="flex w-[50px] items-center bg-[#002c58] pl-[13px]"><Heavy className="h-[21px] w-[22px]" /></div>
        </div>
      </div>
      <div className={`${ring} top-[606px] left-[685.500px] border-[#bfbfbf]`}>
        <svg viewBox="950 668 80 80" className="h-[27px] w-[27px]" fill="none" stroke="#bfbfbf" strokeWidth="9" strokeLinecap="round">
          <path d="M1017 696C1017 685 1010 680 1000 680C989 680 983 686 983 697V720C983 731 989 736 1000 736C1010 736 1017 731 1017 720" />
          <circle cx="967" cy="682" r="6" fill="#bfbfbf" stroke="none" />
        </svg>
      </div>
      <div className={`${ring} top-[661px] left-[685.500px] border-[#005299] bg-[#f1f3f5] text-[#005299]`}>
        <Umbrella className="h-[27px] w-[27px]" />
      </div>
      <div className="absolute top-[689px] left-[677px] flex h-[65px] w-[65px] items-center justify-center rounded-full border-[1.500px] border-[#707070] bg-white text-[#707070] shadow-[0_4px_7px_rgba(0,0,0,0.2)]">
        <Locate className="h-[35px] w-[35px]" />
      </div>
    </section>
  );
}

const Dash = () => <div className="h-full w-px shrink-0 bg-[repeating-linear-gradient(#c9ccce_0_6px,transparent_6px_12px)]" />;

function City({ lines, name, inset }: { lines: string[]; name: string; inset: string }) {
  return (
    <div className="w-[200.500px] shrink-0 font-['Open_Sans','Noto_Sans',sans-serif]">
      <div className={`flex h-[109px] flex-col items-center justify-center font-['Liberation_Sans',Arial,sans-serif] text-[19.8px] leading-[25px] font-bold text-[#1e3953] ${name}`}>
        {lines.map((l) => (
          <span key={l}>{l}</span>
        ))}
      </div>
      <div className={inset}>
        <div className="flex h-[60px] items-start text-[#1e3953]">
          <Cloudy className="h-[49px] w-[48px]" />
          <div className="ml-[12px] flex items-baseline leading-[50px]">
            <span className="text-[50.5px] tracking-[-0.5px]">29</span>
            <span className="text-[26px] tracking-[0.3px]">°C</span>
          </div>
        </div>
        <div className="mt-[9px] flex pl-[17px]">
          <Drops className="mt-[2px] h-[30px] w-[30px] text-[#85c5e5]" />
          <span className="ml-[34px] text-[20px] leading-[34px] text-[#707070]">35 %</span>
        </div>
        <div className="mt-[7px] flex h-[40px] pl-[18px]">
          <Wind className="mt-[2px] h-[30px] w-[30px] text-[#85c5e5]" />
          <div className="ml-[74px] h-[31px] w-[5px] rounded-[2px] bg-[#cbcbcb]" />
        </div>
      </div>
    </div>
  );
}

function Cities() {
  return (
    <div className="mt-[49px] flex h-[224px] overflow-hidden bg-[#f5fbff] pl-[360.500px]">
      <Dash />
      <City lines={["Bokaro"]} name="pt-[4px] pr-[8px]" inset="pl-[25px]" />
      <Dash />
      <City lines={["Giridih-", "Bengabad"]} name="pb-px pl-[6px]" inset="pl-[25.500px]" />
      <Dash />
      <City lines={["Latehar-", "Balumath"]} name="pb-px" inset="pl-[26.500px]" />
      <Dash />
      <City lines={["Jamshedpur"]} name="pt-[4px] pr-[11px]" inset="pl-[27.500px]" />
      <Dash />
      <div className="flex w-[200.500px] shrink-0 flex-col items-center pt-[106px] text-[#a3a3a3]">
        <svg viewBox="0 0 34 36" className="ml-[4px] h-[36px] w-[34px]" stroke="currentColor" strokeWidth="4.800">
          <path d="M17 0V35M0 18H34" />
        </svg>
        <div className="mt-[32px] text-[19.8px] leading-[25px] font-bold">Add City</div>
      </div>
      <Dash />
      <div className="w-[200.500px] shrink-0" />
      <Dash />
    </div>
  );
}

export default function App() {
  return (
    <div className="relative h-[1498px] w-[1912px] overflow-hidden bg-white font-['Liberation_Sans',Arial,sans-serif]">
      <Header />
      <Alerts />
      <Nav />
      <Timeline />
      <div className="mt-[54px] flex h-[56px] items-start pl-[370.500px]">
        <div className="mt-px flex h-[35px] w-[64px] items-center rounded-[18px] border-[1.300px] border-[#707070] pl-[14px] text-[15.5px] font-bold text-[#707070]">
          <span className="pt-[3px]">7</span>
          <svg viewBox="0 0 10 8" className="ml-[15px] h-[8px] w-[10px]" fill="none" stroke="#707070" strokeWidth="2" strokeLinecap="round">
            <path d="M1.500 1.500L5 5.500L8.500 1.500" />
          </svg>
        </div>
        <div className="ml-[12px] pt-[4px] text-[19.8px] leading-[25px] font-bold tracking-[0.05px] text-[#707070]">Days Prediction</div>
      </div>
      <div className="flex h-[785px] pl-[360.500px]">
        <TodayCard />
        <MapPanel />
      </div>
      <Cities />
      <div className="pointer-events-none absolute inset-y-0 left-0 w-px bg-[#cfcfcf]" />
    </div>
  );
}
